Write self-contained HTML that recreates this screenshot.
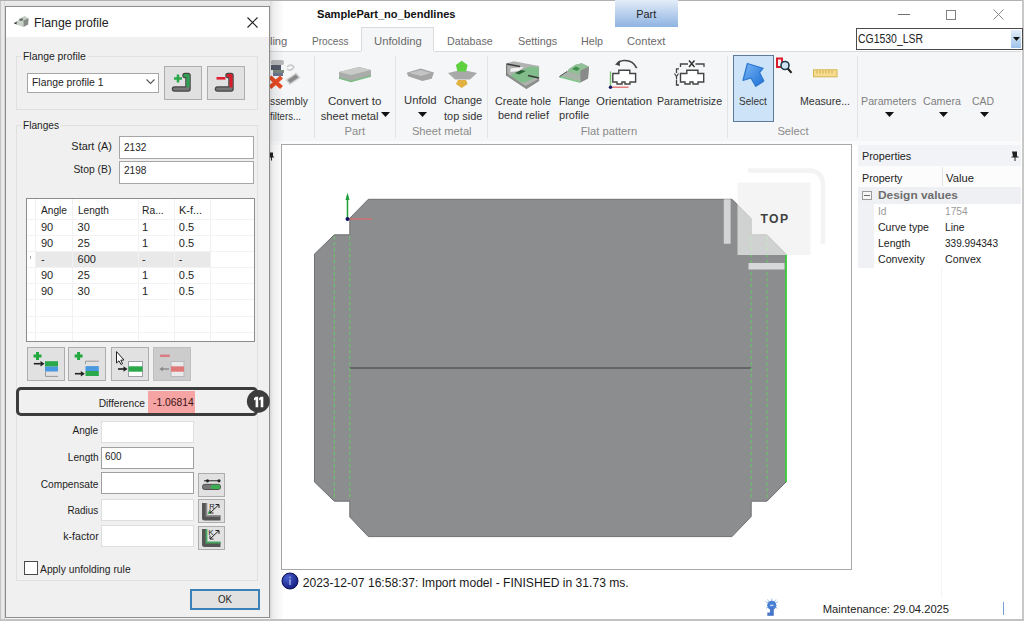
<!DOCTYPE html>
<html><head><meta charset="utf-8"><style>
html,body{margin:0;padding:0;}
body{width:1024px;height:621px;position:relative;overflow:hidden;background:#fff;font-family:"Liberation Sans",sans-serif;}
.t{position:absolute;white-space:nowrap;}
.b{position:absolute;}
svg.b{overflow:visible;}
</style></head><body>
<div class="b" style="left:0px;top:0px;width:1024px;height:1px;background:#b0b0b0"></div>
<div class="b" style="left:1022px;top:0px;width:2px;height:621px;background:#c8c8c8"></div>
<div class="b" style="left:0px;top:619px;width:1024px;height:2px;background:#c2c2c2"></div>
<div class="t" style="left:316.6px;top:8.1px;font-size:11.2px;line-height:13px;color:#111;font-weight:bold;transform:scaleX(0.990);transform-origin:left center;">SamplePart_no_bendlines</div>
<div class="b" style="left:615px;top:0px;width:63px;height:27px;background:linear-gradient(#e3edf8,#8fb3e2)"></div>
<div class="t" style="left:635.7px;top:7.5px;font-size:11.2px;line-height:13px;color:#222;transform:scaleX(0.974);transform-origin:center center;">Part</div>
<div class="b" style="left:898px;top:13.5px;width:12px;height:1.0px;background:#707070"></div>
<div class="b" style="left:946px;top:10px;width:10px;height:10px;border:1px solid #808080;box-sizing:border-box"></div>
<svg class="b" style="left:993px;top:9px" width="11" height="11" viewBox="0 0 11 11"><path d="M0.5 0.5 L10.5 10.5 M10.5 0.5 L0.5 10.5" stroke="#8a8a8a" stroke-width="1"/></svg>
<div class="b" style="left:856px;top:28px;width:167px;height:22px;border:1.5px solid #4a4a4a;background:#fff;box-sizing:border-box"></div>
<div class="b" style="left:1011px;top:30px;width:10px;height:18px;background:linear-gradient(#e4eef9,#9ec2ea)"></div>
<svg class="b" style="left:1013px;top:37px" width="7" height="4" viewBox="0 0 7 4"><path d="M0 0 L7 0 L3.5 4 Z" fill="#111"/></svg>
<div class="t" style="left:857.6px;top:32.1px;font-size:12px;line-height:14px;color:#222;transform:scaleX(0.871);transform-origin:left center;">CG1530_LSR</div>
<div class="b" style="left:361px;top:27px;width:73px;height:25px;background:#f5f6f7;border:1px solid #dadbdc;border-bottom:none;box-sizing:border-box"></div>
<div class="t" style="left:269.9px;top:34.5px;font-size:11.2px;line-height:13px;color:#6a6a6a;">ling</div>
<div class="t" style="left:312.3px;top:34.5px;font-size:11.2px;line-height:13px;color:#6a6a6a;transform:scaleX(0.905);transform-origin:left center;">Process</div>
<div class="t" style="left:373.9px;top:34.5px;font-size:11.2px;line-height:13px;color:#6a6a6a;transform:scaleX(1.010);transform-origin:left center;">Unfolding</div>
<div class="t" style="left:447.1px;top:34.5px;font-size:11.2px;line-height:13px;color:#6a6a6a;transform:scaleX(0.953);transform-origin:left center;">Database</div>
<div class="t" style="left:517.5px;top:34.5px;font-size:11.2px;line-height:13px;color:#6a6a6a;transform:scaleX(0.971);transform-origin:left center;">Settings</div>
<div class="t" style="left:580.9px;top:34.5px;font-size:11.2px;line-height:13px;color:#6a6a6a;transform:scaleX(0.959);transform-origin:left center;">Help</div>
<div class="t" style="left:627.1px;top:34.5px;font-size:11.2px;line-height:13px;color:#6a6a6a;transform:scaleX(0.995);transform-origin:left center;">Context</div>
<div class="b" style="left:270px;top:51px;width:751px;height:90px;background:#f5f6f7;border-top:1px solid #dadbdc;box-sizing:border-box"></div>
<div class="b" style="left:361px;top:51px;width:73px;height:1px;background:#f5f6f7"></div>
<div class="b" style="left:270px;top:141px;width:751px;height:4px;background:#fafafa"></div>
<div class="b" style="left:314px;top:56px;width:1px;height:82px;background:#e2e3e4"></div>
<div class="b" style="left:394.5px;top:56px;width:1.0px;height:82px;background:#e2e3e4"></div>
<div class="b" style="left:487px;top:56px;width:1px;height:82px;background:#e2e3e4"></div>
<div class="b" style="left:727px;top:56px;width:1px;height:82px;background:#e2e3e4"></div>
<div class="b" style="left:856.5px;top:56px;width:1.0px;height:82px;background:#e2e3e4"></div>
<div class="t" style="left:344.5px;top:125.3px;font-size:11.2px;line-height:13px;color:#8a8a8a;">Part</div>
<div class="t" style="left:411.9px;top:125.3px;font-size:11.2px;line-height:13px;color:#8a8a8a;">Sheet metal</div>
<div class="t" style="left:580.7px;top:125.3px;font-size:11.2px;line-height:13px;color:#8a8a8a;">Flat pattern</div>
<div class="t" style="left:777.4px;top:125.3px;font-size:11.2px;line-height:13px;color:#8a8a8a;">Select</div>
<div class="t" style="left:270.0px;top:94.8px;font-size:11.2px;line-height:13px;color:#333;transform:scaleX(0.925);transform-origin:left center;">ssembly</div>
<div class="t" style="left:270.0px;top:109.9px;font-size:11.2px;line-height:13px;color:#333;transform:scaleX(0.859);transform-origin:left center;">filters...</div>
<div class="t" style="left:328.1px;top:94.8px;font-size:11.2px;line-height:13px;color:#333;transform:scaleX(1.034);transform-origin:left center;">Convert to</div>
<div class="t" style="left:320.7px;top:109.9px;font-size:11.2px;line-height:13px;color:#333;">sheet metal</div>
<svg class="b" style="left:381px;top:112px" width="9" height="5" viewBox="0 0 9 5"><path d="M0 0 L9 0 L4.5 5 Z" fill="#111"/></svg>
<div class="t" style="left:403.8px;top:94.2px;font-size:11.2px;line-height:13px;color:#333;transform:scaleX(1.007);transform-origin:left center;">Unfold</div>
<svg class="b" style="left:417.5px;top:112px" width="9" height="5" viewBox="0 0 9 5"><path d="M0 0 L9 0 L4.5 5 Z" fill="#111"/></svg>
<div class="t" style="left:443.6px;top:94.2px;font-size:11.2px;line-height:13px;color:#333;transform:scaleX(0.969);transform-origin:left center;">Change</div>
<div class="t" style="left:443.6px;top:109.9px;font-size:11.2px;line-height:13px;color:#333;transform:scaleX(0.979);transform-origin:left center;">top side</div>
<div class="t" style="left:494.8px;top:94.5px;font-size:11.2px;line-height:13px;color:#333;transform:scaleX(0.969);transform-origin:left center;">Create hole</div>
<div class="t" style="left:497.7px;top:109.4px;font-size:11.2px;line-height:13px;color:#333;transform:scaleX(0.975);transform-origin:left center;">bend relief</div>
<div class="t" style="left:558.6px;top:94.5px;font-size:11.2px;line-height:13px;color:#333;transform:scaleX(0.905);transform-origin:left center;">Flange</div>
<div class="t" style="left:559.2px;top:109.4px;font-size:11.2px;line-height:13px;color:#333;transform:scaleX(0.987);transform-origin:left center;">profile</div>
<div class="t" style="left:596.2px;top:94.8px;font-size:11.2px;line-height:13px;color:#333;transform:scaleX(1.024);transform-origin:left center;">Orientation</div>
<div class="t" style="left:657.4px;top:94.8px;font-size:11.2px;line-height:13px;color:#333;transform:scaleX(0.952);transform-origin:left center;">Parametrisize</div>
<div class="b" style="left:733px;top:55px;width:41px;height:67px;background:#cde3f8;border:1px solid #5d7a98;box-sizing:border-box"></div>
<div class="t" style="left:739.2px;top:94.5px;font-size:11.2px;line-height:13px;color:#333;transform:scaleX(0.893);transform-origin:left center;">Select</div>
<div class="t" style="left:800.4px;top:94.5px;font-size:11.2px;line-height:13px;color:#333;transform:scaleX(0.945);transform-origin:left center;">Measure...</div>
<div class="t" style="left:861.0px;top:94.5px;font-size:11.2px;line-height:13px;color:#808080;transform:scaleX(0.955);transform-origin:left center;">Parameters</div>
<div class="t" style="left:923.4px;top:94.5px;font-size:11.2px;line-height:13px;color:#808080;transform:scaleX(0.951);transform-origin:left center;">Camera</div>
<div class="t" style="left:972.3px;top:94.5px;font-size:11.2px;line-height:13px;color:#808080;transform:scaleX(0.935);transform-origin:left center;">CAD</div>
<svg class="b" style="left:884.9px;top:112px" width="9" height="5" viewBox="0 0 9 5"><path d="M0 0 L9 0 L4.5 5 Z" fill="#111"/></svg>
<svg class="b" style="left:938.6px;top:112px" width="9" height="5" viewBox="0 0 9 5"><path d="M0 0 L9 0 L4.5 5 Z" fill="#111"/></svg>
<svg class="b" style="left:980.1px;top:112px" width="9" height="5" viewBox="0 0 9 5"><path d="M0 0 L9 0 L4.5 5 Z" fill="#111"/></svg>
<svg class="b" style="left:0px;top:0px" width="1024" height="150" viewBox="0 0 1024 150"><defs><linearGradient id="gg" x1="0" y1="0" x2="0" y2="1"><stop offset="0" stop-color="#d8d8d8"/><stop offset="1" stop-color="#8a8a8a"/></linearGradient><linearGradient id="gb" x1="0" y1="0" x2="1" y2="1"><stop offset="0" stop-color="#7ab8f5"/><stop offset="1" stop-color="#1d6ed6"/></linearGradient></defs><rect x="271" y="60" width="13" height="5" rx="2" fill="#b8b8b8"/><rect x="271" y="65" width="10" height="5" fill="#555a6a"/><rect x="273" y="70" width="11" height="3" fill="#7a8a80"/><rect x="273" y="73" width="10" height="3" fill="#6a7590"/><path d="M270 77 L281.5 87.5 M281.5 77 L270 87.5" stroke="#e84a22" stroke-width="4.2"/><path d="M287 67 q4 -4 7 0 q-3 5 -7 2" stroke="#c8c8c8" stroke-width="1.5" fill="none"/><path d="M286.5 80 L296 73.5 L299.5 77.5 L290 84 Z" fill="#8a8a8a" stroke="#d0d0d0" stroke-width="1.4"/><path d="M339 72 L359 67 L371 70 L371 76 L351 81.5 L339 78 Z" fill="#a9aca9"/><path d="M339 72 L359 67 L371 70 L351 75 Z" fill="#c9cbc9"/><path d="M339 78 L351 81.5 L371 76" stroke="#7dbb85" stroke-width="1.5" fill="none"/><path d="M406.7 72.8 L420.7 68.5 L434 72.4 L431.7 78.7 L422.3 81 L408.2 76.3 Z" fill="#a5a5a5"/><path d="M409 73 L420.7 70 L431 73 L421 76 Z" fill="#c4c4c4"/><path d="M448 73 L462 69.7 L477 73 L470 79.4 L455 79.4 Z" fill="#a9a9a9"/><path d="M461.7 60.7 L467.6 65 L466 71.6 L457.5 71.6 L455.9 65 Z" fill="#5fd040"/><path d="M458 80 L466 80 L467.6 84 L461.7 88 L455.9 84 Z" fill="#e0b040"/><path d="M506.6 63.5 L513.6 61.2 L539.1 66 L539.1 81 L526.4 89 L506.6 75.7 Z" fill="#b0b2b0"/><path d="M512 74 L530 66.5 L539 67.5 L539 76.5 L523 83 L510 76.5 Z" fill="#80bd8a"/><path d="M510.5 68.5 L524 66.8 L519 71 L510.5 72 Z" fill="#f2f2f2"/><path d="M515 73 L521 70 L526 71 L519 74.5 Z" fill="#2f5f3a"/><path d="M506.6 75.7 L526.4 89 L539.1 81 L539.1 78.5 L525.5 86 L506.6 73 Z" fill="#8c8e8c"/><path d="M507 64 L520 66.5" stroke="#3a3a3a" stroke-width="1.6"/><path d="M528 75.5 L539 78" stroke="#3a3a3a" stroke-width="1.4"/><path d="M506.6 63.5 L506.6 75.7" stroke="#777" stroke-width="1.2"/><path d="M559.2 76.6 L567 71.5 L569 69 L575.6 64.7 L581.8 63.2 L589 66.8 L588 78.6 L580.8 82.2 Z" fill="#9aa89a"/><path d="M559.5 76.5 L567 71.5 L580 74.5 L580.8 82 Z" fill="#a8b4a8"/><path d="M569 69 L575.6 64.7 L581.8 63.2 L589 66.8 L580.5 70.5 L580 74.5 L567.5 71.5 Z" fill="#92c096"/><path d="M572 69 L576 66.5 L580 68.5 L577 71 Z" fill="#3f8f4f"/><path d="M580.5 70.5 L589 66.8 L588 78.6 L580.8 82.2 Z" fill="#8a8a8a"/><path d="M559.5 76.8 L580.8 82.4" stroke="#7cc88a" stroke-width="1.4"/><path d="M559.5 76.5 L567 71.5" stroke="#555" stroke-width="1"/><path d="M636.7 68.2 Q633 60 624 60.5 Q619 61 617.5 63.5" stroke="#444" stroke-width="1.6" fill="none"/><path d="M615 64.5 L619.5 60.5 L620 66 Z" fill="#444"/><path d="M612.8 73.5 L618.8 73.5 L618.8 70.3 L629.8 70.3 L629.8 73.5 L635.6 73.5 L635.6 82 L630 82 L630 84 L625 84 L625 82 L622 82 L622 84 L617 84 L617 82 L612.8 82 Z" fill="#fff" stroke="#444" stroke-width="1.4"/><path d="M610.5 71.5 L610.5 87" stroke="#7ac070" stroke-width="1.4"/><path d="M610.5 87.2 L628.5 87.2" stroke="#e06060" stroke-width="1.2"/><circle cx="610.5" cy="87.3" r="1.7" fill="#1a1a6a"/><path d="M680.5 73.5 L686.8 73.5 L686.8 70.3 L697.9 70.3 L697.9 73.5 L703.7 73.5 L703.7 82 L698 82 L698 84 L693 84 L693 82 L690 82 L690 84 L685 84 L685 82 L680.5 82 Z" fill="#fff" stroke="#444" stroke-width="1.4"/><path d="M680.5 67 L680.5 64 L688 64 M695.5 64 L704 64 L704 67" stroke="#444" stroke-width="1.3" fill="none"/><path d="M689 60.5 L694.5 67 M694.5 60.5 L689 67" stroke="#333" stroke-width="1.5"/><path d="M679 68.8 L676.5 68.8 L676.5 73 M676.5 80 L676.5 85 L679 85" stroke="#444" stroke-width="1.3" fill="none"/><path d="M674.5 73.5 L676.5 76.5 L678.5 73.5 M676.5 76.5 L676.5 79.5" stroke="#444" stroke-width="1.2" fill="none"/><path d="M747.4 63.5 L763 68.3 L759.5 72.5 L763.8 81 L755.8 86.3 L751 78 L743 80.3 Z" fill="url(#gb)" stroke="#2f78d0" stroke-width="1.3" stroke-linejoin="round"/><rect x="777" y="58.5" width="5" height="8.5" fill="none" stroke="#d81e2a" stroke-width="2"/><circle cx="785" cy="65.5" r="4" fill="#cfe3f0" stroke="#1f3f4f" stroke-width="1.6"/><path d="M787.8 68.5 L791.5 72.8" stroke="#1a1a1a" stroke-width="2"/><rect x="813.5" y="69.8" width="23.5" height="7" fill="#f6dc8e" stroke="#d8b450" stroke-width="1"/><path d="M817 70.5 v3 M820 70.5 v3 M823 70.5 v3 M826 70.5 v3 M829 70.5 v3 M832 70.5 v3" stroke="#c8a040" stroke-width="0.8"/></svg>
<div class="b" style="left:281px;top:144px;width:571px;height:426px;background:#fff;border:1px solid #a8a8a8;box-sizing:border-box"></div>
<svg class="b" style="left:0px;top:0px" width="1024" height="621" viewBox="0 0 1024 621"><polygon points="368.3,199.3 732,199.3 751.2,218.5 751.2,234.8 767,234.8 786,254 786,482 767,501.2 751.2,501.2 751.2,516.5 732,536.6 368.3,536.6 349.8,517 349.8,501.2 334.3,501.2 314.5,482 314.5,254 334.3,234.8 349.8,234.8 349.8,218.2" fill="#8b8d8f" stroke="#6f7173" stroke-width="1"/><line x1="349.8" y1="368" x2="751.2" y2="368" stroke="#3a3a3a" stroke-width="1"/><g stroke="#66cc66" stroke-width="1.1" stroke-dasharray="3.5 2.5" stroke-opacity="0.85"><line x1="334.3" y1="236" x2="334.3" y2="500"/><line x1="349.8" y1="236" x2="349.8" y2="500"/><line x1="751.2" y1="236" x2="751.2" y2="500"/><line x1="767" y1="236" x2="767" y2="500"/></g><line x1="786" y1="254" x2="786" y2="482" stroke="#3ad03a" stroke-width="1.8"/><line x1="347.5" y1="219" x2="347.5" y2="196" stroke="#1e9e3a" stroke-width="1.5"/><path d="M345.5 200 L347.5 192.5 L349.5 200 Z" fill="#1e9e3a"/><line x1="348" y1="219" x2="372" y2="219" stroke="#e06a6a" stroke-width="1.2"/><circle cx="347.5" cy="219" r="2" fill="#101060"/><path d="M748 170.5 L808 170.5 Q823 170.5 823 185.5 L823 244" stroke="#f3f3f3" stroke-width="4.5" fill="none"/><rect x="737.5" y="182.5" width="73" height="72.5" fill="#efefef" fill-opacity="0.69"/><rect x="723.8" y="199.3" width="6.8" height="44.5" fill="#d2d4d6"/><rect x="748.5" y="263" width="36" height="6.5" fill="#d6d8d9"/></svg>
<div class="t" style="left:760.4px;top:211.5px;font-size:12.2px;line-height:15px;color:#404040;font-weight:bold;letter-spacing:1.5px;">TOP</div>
<svg class="b" style="left:269px;top:152px" width="5" height="9" viewBox="0 0 5 9"><path d="M0 0.5 h4 v4 h1 v1 h-2 v3 h-1 v-3 h-2 z" fill="#222"/></svg>
<div class="b" style="left:858px;top:145px;width:163px;height:21px;background:#f1f3f7"></div>
<div class="t" style="left:862.3px;top:149.5px;font-size:11.2px;line-height:13px;color:#222;transform:scaleX(0.966);transform-origin:left center;">Properties</div>
<svg class="b" style="left:1010px;top:151px" width="9" height="10" viewBox="0 0 9 10"><path d="M2 0.5 h5 v5 h1.5 v1 h-3 v3.5 h-1 v-3.5 h-3 v-1 h1.5 z" fill="#222"/></svg>
<div class="b" style="left:858px;top:166px;width:163px;height:21px;background:#fcfcfc"></div>
<div class="b" style="left:941.5px;top:167px;width:1.0px;height:19px;background:#e4e4e4"></div>
<div class="t" style="left:862.3px;top:171.5px;font-size:11.2px;line-height:13px;color:#222;transform:scaleX(0.957);transform-origin:left center;">Property</div>
<div class="t" style="left:946.1px;top:171.5px;font-size:11.2px;line-height:13px;color:#222;">Value</div>
<div class="b" style="left:858px;top:187px;width:163px;height:17px;background:#eef0f3"></div>
<div class="b" style="left:858px;top:204px;width:16px;height:64px;background:#f0f1f4"></div>
<div class="b" style="left:862px;top:190.5px;width:9.5px;height:9.0px;border:1px solid #9a9a9a;box-sizing:border-box;background:#f6f6f6"></div>
<div class="b" style="left:864px;top:194.5px;width:5.5px;height:1.0px;background:#6a6a6a"></div>
<div class="t" style="left:878.0px;top:188.3px;font-size:11.5px;line-height:14px;color:#6e6e6e;font-weight:bold;transform:scaleX(1.034);transform-origin:left center;">Design values</div>
<div class="t" style="left:878.0px;top:204.9px;font-size:11.2px;line-height:13px;color:#9a9a9a;transform:scaleX(0.910);transform-origin:left center;">Id</div>
<div class="t" style="left:944.6px;top:204.9px;font-size:11.2px;line-height:13px;color:#9a9a9a;transform:scaleX(0.907);transform-origin:left center;">1754</div>
<div class="t" style="left:878.0px;top:221.1px;font-size:11.2px;line-height:13px;color:#222;transform:scaleX(0.942);transform-origin:left center;">Curve type</div>
<div class="t" style="left:944.6px;top:221.1px;font-size:11.2px;line-height:13px;color:#222;transform:scaleX(0.926);transform-origin:left center;">Line</div>
<div class="t" style="left:878.0px;top:237.2px;font-size:11.2px;line-height:13px;color:#222;transform:scaleX(0.943);transform-origin:left center;">Length</div>
<div class="t" style="left:944.6px;top:237.2px;font-size:11.2px;line-height:13px;color:#222;transform:scaleX(0.896);transform-origin:left center;">339.994343</div>
<div class="t" style="left:878.0px;top:253.4px;font-size:11.2px;line-height:13px;color:#222;transform:scaleX(0.952);transform-origin:left center;">Convexity</div>
<div class="t" style="left:944.6px;top:253.4px;font-size:11.2px;line-height:13px;color:#222;transform:scaleX(0.953);transform-origin:left center;">Convex</div>
<div class="b" style="left:941px;top:268px;width:1px;height:330px;background:#f4f4f4"></div>
<svg class="b" style="left:281px;top:572px" width="18" height="18" viewBox="0 0 18 18"><defs><radialGradient id="ig" cx="0.35" cy="0.3" r="0.8"><stop offset="0" stop-color="#4a60d0"/><stop offset="1" stop-color="#101878"/></radialGradient></defs><circle cx="9" cy="9" r="8" fill="url(#ig)" stroke="#0a0f50" stroke-width="1"/><rect x="8.3" y="7.3" width="1.4" height="5.6" fill="#a8b4f0"/><rect x="8.3" y="4.6" width="1.4" height="1.5" fill="#a8b4f0"/></svg>
<div class="t" style="left:302.7px;top:575.7px;font-size:12.1px;line-height:15px;color:#1a1a1a;">2023-12-07 16:58:37: Import model - FINISHED in 31.73 ms.</div>
<svg class="b" style="left:758px;top:594px" width="28" height="26" viewBox="0 0 28 26"><g stroke="#9cc0ec" stroke-width="1"><path d="M13.8 11.3 L7.5 7.5 M13.8 11.3 L20 7.5 M13.8 11.3 L9.5 5.5 M13.8 11.3 L18 5.5 M13.8 11.3 L13.8 4.6 M13.8 11.3 L8 14.3 M13.8 11.3 L19.6 14.3"/></g><circle cx="13.8" cy="11.3" r="4.6" fill="#4a80d2"/><rect x="12" y="14" width="3.8" height="7.8" fill="#4a78c8"/><rect x="9.3" y="18.5" width="3" height="3.3" fill="#4a78c8"/><rect x="12.2" y="10.8" width="3.2" height="1.1" fill="#dfeaff"/></svg>
<div class="t" style="left:822.8px;top:602.6px;font-size:11.2px;line-height:13px;color:#222;">Maintenance: 29.04.2025</div>
<div class="b" style="left:1003px;top:602px;width:1px;height:13px;background:#7aa0d0"></div>
<div class="b" style="left:0px;top:1px;width:5px;height:618px;background:linear-gradient(90deg,#b4b4b4 0,#e6e6e6 1.5px,#ececec 3.5px,#c8c8c8 5px)"></div>
<div class="b" style="left:5px;top:1px;width:265px;height:5px;background:linear-gradient(#ececec,#e4e4e4)"></div>
<div class="b" style="left:270px;top:1px;width:14px;height:618px;background:linear-gradient(90deg,rgba(0,0,0,0.16),rgba(0,0,0,0.07) 3px,rgba(0,0,0,0.0))"></div>
<div class="b" style="left:5px;top:617px;width:265px;height:2px;background:linear-gradient(rgba(0,0,0,0.12),rgba(0,0,0,0))"></div>
<div class="b" style="left:5px;top:6px;width:265px;height:612px;background:#f0f0f0;border:1px solid #8c8c8c;box-sizing:border-box"></div>
<div class="b" style="left:6px;top:7px;width:263px;height:30px;background:#fff"></div>
<svg class="b" style="left:13px;top:15px" width="17" height="13" viewBox="0 0 17 13"><path d="M0.8 8.3 L5.7 5.3 L6 4 L11.5 1.3 L15.5 3.4 L15 9.5 L10.6 11.8 Z" fill="#a8b0a8"/><path d="M6 4 L11.5 1.3 L15.5 3.4 L10.5 5.5 Z" fill="#c4ccc4"/><path d="M6.3 4.6 L9 3.3 L10.3 4.6 L7.6 5.9 Z" fill="#5a625a"/><path d="M10.5 5.5 L15.5 3.4 L15 9.5 L10.6 11.8 Z" fill="#858b85"/><path d="M1.5 8.3 L5.7 5.8 L10.4 6.2 L10.5 11.5 Z" fill="#c8d2c8"/><path d="M0.8 8.3 L3.8 6.6 L3.5 9.6 Z" fill="#3a3f3a"/></svg>
<div class="t" style="left:33.5px;top:14.5px;font-size:13px;line-height:16px;color:#222;transform:scaleX(0.947);transform-origin:left center;">Flange profile</div>
<svg class="b" style="left:246.5px;top:16.5px" width="11" height="11" viewBox="0 0 11 11"><path d="M0.5 0.5 L10.5 10.5 M10.5 0.5 L0.5 10.5" stroke="#222" stroke-width="1.1"/></svg>
<div class="b" style="left:16px;top:56px;width:242px;height:54px;border:1px solid #e0e0e0;box-sizing:border-box"></div>
<div class="b" style="left:21px;top:53px;width:66.8px;height:6px;background:#f0f0f0"></div>
<div class="t" style="left:22.9px;top:49.5px;font-size:11px;line-height:13px;color:#1e1e1e;transform:scaleX(0.942);transform-origin:left center;">Flange profile</div>
<div class="b" style="left:16px;top:125px;width:242px;height:456px;border:1px solid #e0e0e0;box-sizing:border-box"></div>
<div class="b" style="left:21px;top:122px;width:40px;height:6px;background:#f0f0f0"></div>
<div class="t" style="left:22.9px;top:118.5px;font-size:11px;line-height:13px;color:#1e1e1e;transform:scaleX(0.920);transform-origin:left center;">Flanges</div>
<div class="b" style="left:27px;top:73px;width:132px;height:20px;background:#fff;border:1px solid #a6a6a6;box-sizing:border-box"></div>
<div class="t" style="left:31.7px;top:76.3px;font-size:11px;line-height:13px;color:#1e1e1e;transform:scaleX(0.942);transform-origin:left center;">Flange profile 1</div>
<svg class="b" style="left:146px;top:79px" width="9" height="6" viewBox="0 0 9 6"><path d="M0.5 0.5 L4.5 4.5 L8.5 0.5" stroke="#555" stroke-width="1.1" fill="none"/></svg>
<div class="b" style="left:164px;top:66px;width:38px;height:34px;background:#e1e1e1;border:1px solid #adadad;box-sizing:border-box"></div>
<div class="b" style="left:207px;top:66px;width:38px;height:34px;background:#e1e1e1;border:1px solid #adadad;box-sizing:border-box"></div>
<svg class="b" style="left:164px;top:66px" width="38" height="34" viewBox="0 0 38 34"><path d="M10 12.5 h8 M14 8.5 v8" stroke="#2aa84a" stroke-width="2.6"/><path d="M10.5 23 H24 V9.5 H21" stroke="#444" stroke-width="5.5" fill="none" stroke-linejoin="round" stroke-linecap="round"/><path d="M10.5 23 H24 V9.5 H21" stroke="#777" stroke-width="3" fill="none" stroke-linejoin="round" stroke-linecap="round"/><path d="M24 20 V9.5 H21" stroke="#2ea050" stroke-width="3.2" fill="none" stroke-linejoin="round" stroke-linecap="round"/></svg>
<svg class="b" style="left:207px;top:66px" width="38" height="34" viewBox="0 0 38 34"><path d="M9.5 12.3 h9" stroke="#e02030" stroke-width="2.6"/><path d="M10.5 23 H24 V9.5 H21" stroke="#444" stroke-width="5.5" fill="none" stroke-linejoin="round" stroke-linecap="round"/><path d="M10.5 23 H24 V9.5 H21" stroke="#777" stroke-width="3" fill="none" stroke-linejoin="round" stroke-linecap="round"/><path d="M24 20 V9.5 H21" stroke="#d81e2a" stroke-width="3.2" fill="none" stroke-linejoin="round" stroke-linecap="round"/></svg>
<div class="t" style="left:70.5px;top:140.1px;font-size:11px;line-height:13px;color:#1e1e1e;transform:scaleX(0.991);transform-origin:right center;">Start (A)</div>
<div class="b" style="left:119px;top:136px;width:135px;height:23px;background:#fff;border:1px solid #a6a6a6;box-sizing:border-box"></div>
<div class="t" style="left:124.4px;top:140.5px;font-size:11px;line-height:13px;color:#1e1e1e;transform:scaleX(0.915);transform-origin:left center;">2132</div>
<div class="t" style="left:71.1px;top:162.5px;font-size:11px;line-height:13px;color:#1e1e1e;transform:scaleX(0.939);transform-origin:right center;">Stop (B)</div>
<div class="b" style="left:119px;top:161px;width:135px;height:23px;background:#fff;border:1px solid #a6a6a6;box-sizing:border-box"></div>
<div class="t" style="left:124.4px;top:164.1px;font-size:11px;line-height:13px;color:#1e1e1e;transform:scaleX(0.915);transform-origin:left center;">2198</div>
<div class="b" style="left:26px;top:198px;width:229px;height:144px;background:#fff;border:1px solid #8c8c8c;box-sizing:border-box"></div>
<div class="b" style="left:35px;top:251px;width:175px;height:16px;background:#e9e9e9"></div>
<div class="b" style="left:27px;top:219px;width:227px;height:1px;background:#f3f3f3"></div>
<div class="b" style="left:27px;top:235px;width:227px;height:1px;background:#f3f3f3"></div>
<div class="b" style="left:27px;top:251px;width:227px;height:1px;background:#f3f3f3"></div>
<div class="b" style="left:27px;top:267px;width:227px;height:1px;background:#f3f3f3"></div>
<div class="b" style="left:27px;top:283px;width:227px;height:1px;background:#f3f3f3"></div>
<div class="b" style="left:27px;top:299px;width:227px;height:1px;background:#f3f3f3"></div>
<div class="b" style="left:27px;top:316px;width:227px;height:1px;background:#f3f3f3"></div>
<div class="b" style="left:27px;top:332px;width:227px;height:1px;background:#f3f3f3"></div>
<div class="b" style="left:35px;top:199px;width:1px;height:142px;background:#f1f1f1"></div>
<div class="b" style="left:72px;top:199px;width:1px;height:142px;background:#f1f1f1"></div>
<div class="b" style="left:137.5px;top:199px;width:1.0px;height:142px;background:#f1f1f1"></div>
<div class="b" style="left:174px;top:199px;width:1px;height:142px;background:#f1f1f1"></div>
<div class="b" style="left:210px;top:199px;width:1px;height:142px;background:#f1f1f1"></div>
<div class="b" style="left:30px;top:256px;width:1px;height:3px;background:#aaa"></div>
<div class="t" style="left:40.9px;top:203.5px;font-size:11px;line-height:13px;color:#1e1e1e;transform:scaleX(0.924);transform-origin:left center;">Angle</div>
<div class="t" style="left:77.6px;top:203.5px;font-size:11px;line-height:13px;color:#1e1e1e;transform:scaleX(0.915);transform-origin:left center;">Length</div>
<div class="t" style="left:141.9px;top:203.5px;font-size:11px;line-height:13px;color:#1e1e1e;transform:scaleX(0.934);transform-origin:left center;">Ra...</div>
<div class="t" style="left:178.8px;top:203.5px;font-size:11px;line-height:13px;color:#1e1e1e;transform:scaleX(0.990);transform-origin:left center;">K-f...</div>
<div class="t" style="left:40.9px;top:220.8px;font-size:11px;line-height:13px;color:#1e1e1e;">90</div>
<div class="t" style="left:77.6px;top:220.8px;font-size:11px;line-height:13px;color:#1e1e1e;">30</div>
<div class="t" style="left:141.9px;top:220.8px;font-size:11px;line-height:13px;color:#1e1e1e;">1</div>
<div class="t" style="left:178.8px;top:220.8px;font-size:11px;line-height:13px;color:#1e1e1e;">0.5</div>
<div class="t" style="left:40.9px;top:236.9px;font-size:11px;line-height:13px;color:#1e1e1e;">90</div>
<div class="t" style="left:77.6px;top:236.9px;font-size:11px;line-height:13px;color:#1e1e1e;">25</div>
<div class="t" style="left:141.9px;top:236.9px;font-size:11px;line-height:13px;color:#1e1e1e;">1</div>
<div class="t" style="left:178.8px;top:236.9px;font-size:11px;line-height:13px;color:#1e1e1e;">0.5</div>
<div class="t" style="left:40.9px;top:253.0px;font-size:11px;line-height:13px;color:#1e1e1e;">-</div>
<div class="t" style="left:77.6px;top:253.0px;font-size:11px;line-height:13px;color:#1e1e1e;">600</div>
<div class="t" style="left:141.9px;top:253.0px;font-size:11px;line-height:13px;color:#1e1e1e;">-</div>
<div class="t" style="left:178.8px;top:253.0px;font-size:11px;line-height:13px;color:#1e1e1e;">-</div>
<div class="t" style="left:40.9px;top:269.1px;font-size:11px;line-height:13px;color:#1e1e1e;">90</div>
<div class="t" style="left:77.6px;top:269.1px;font-size:11px;line-height:13px;color:#1e1e1e;">25</div>
<div class="t" style="left:141.9px;top:269.1px;font-size:11px;line-height:13px;color:#1e1e1e;">1</div>
<div class="t" style="left:178.8px;top:269.1px;font-size:11px;line-height:13px;color:#1e1e1e;">0.5</div>
<div class="t" style="left:40.9px;top:285.2px;font-size:11px;line-height:13px;color:#1e1e1e;">90</div>
<div class="t" style="left:77.6px;top:285.2px;font-size:11px;line-height:13px;color:#1e1e1e;">30</div>
<div class="t" style="left:141.9px;top:285.2px;font-size:11px;line-height:13px;color:#1e1e1e;">1</div>
<div class="t" style="left:178.8px;top:285.2px;font-size:11px;line-height:13px;color:#1e1e1e;">0.5</div>
<div class="b" style="left:27px;top:347px;width:38px;height:34px;background:#e1e1e1;border:1px solid #adadad;box-sizing:border-box"></div>
<div class="b" style="left:67.5px;top:347px;width:38.0px;height:34px;background:#e1e1e1;border:1px solid #adadad;box-sizing:border-box"></div>
<div class="b" style="left:110.5px;top:347px;width:38.5px;height:34px;background:#e1e1e1;border:1px solid #adadad;box-sizing:border-box"></div>
<div class="b" style="left:153px;top:347px;width:38px;height:34px;background:#cccccc;border:1px solid #bfbfbf;box-sizing:border-box"></div>
<svg class="b" style="left:0px;top:340px" width="200" height="45" viewBox="0 0 200 45"><path d="M33.5 15.9 h8 M37.5 11.9 v8" stroke="#22a840" stroke-width="3"/><path d="M33.8 23.7 h7" stroke="#222" stroke-width="1.6"/><path d="M40.5 21 L44.5 23.7 L40.5 26.4 Z" fill="#222"/><rect x="45" y="21.2" width="13" height="5.4" fill="#2aa84a"/><rect x="45" y="26.6" width="13" height="4.9" fill="#4a98e0"/><path d="M45.5 31.5 V36.4 H58" stroke="#999" stroke-width="1" fill="none"/><path d="M74.6 15.9 h8 M78.6 11.9 v8" stroke="#22a840" stroke-width="3"/><path d="M85.5 24 V21.2 H98.8" stroke="#999" stroke-width="1" fill="none"/><rect x="85.5" y="26.1" width="13.3" height="4.9" fill="#4a98e0"/><rect x="85.5" y="31" width="13.3" height="5" fill="#2aa84a"/><path d="M74.9 33.7 h6.5" stroke="#222" stroke-width="1.6"/><path d="M80.8 31 L84.8 33.7 L80.8 36.4 Z" fill="#222"/><path d="M116.5 11.6 L116.5 23 L119 20.8 L121 24.5 L122.6 23.7 L120.8 20.2 L124 20 Z" fill="#fff" stroke="#222" stroke-width="1"/><rect x="128.5" y="21.5" width="14" height="15" fill="#fff" stroke="#a0a0a8" stroke-width="1"/><rect x="128.5" y="26.3" width="14" height="5.4" fill="#2aa84a"/><path d="M118 29 h6" stroke="#222" stroke-width="1.6"/><path d="M123.5 26.3 L127.5 29 L123.5 31.7 Z" fill="#222"/><path d="M160.1 15.8 h9.7" stroke="#d87a80" stroke-width="2.4"/><rect x="171" y="21.5" width="13" height="15" fill="#eaeaea" stroke="#b8b8c0" stroke-width="1"/><rect x="171" y="26.3" width="13" height="5.4" fill="#e07a7a"/><path d="M162 29 h7" stroke="#888" stroke-width="1.4"/><path d="M163 26.8 L159.3 29 L163 31.2 Z" fill="#888"/></svg>
<div class="b" style="left:15.5px;top:387px;width:242.5px;height:28.5px;border:3px solid #3c3c3c;border-radius:5px;box-sizing:border-box"></div>
<div class="t" style="left:95.1px;top:396.5px;font-size:11px;line-height:13px;color:#1e1e1e;transform:scaleX(0.927);transform-origin:right center;">Difference</div>
<div class="b" style="left:148px;top:391px;width:46.5px;height:21.5px;background:#f5a3a3"></div>
<div class="t" style="left:152.5px;top:395.8px;font-size:11px;line-height:13px;color:#3a1414;transform:scaleX(0.940);transform-origin:left center;">-1.06814</div>
<svg class="b" style="left:247px;top:390px" width="23" height="23" viewBox="0 0 23 23"><circle cx="11.3" cy="11.3" r="11.4" fill="#3d3d3d"/></svg>
<svg class="b" style="left:247px;top:390px" width="23" height="23" viewBox="0 0 23 23"><path d="M8.6 6.8 L11.2 6.8 L11.2 17.3 L8.6 17.3 L8.6 9.6 L7 10.6 L7 8.2 Z" fill="#fff"/><path d="M13.7 6.8 L16.3 6.8 L16.3 17.3 L13.7 17.3 L13.7 9.6 L12.1 10.6 L12.1 8.2 Z" fill="#fff"/></svg>
<div class="t" style="left:70.1px;top:424.4px;font-size:11px;line-height:13px;color:#1e1e1e;transform:scaleX(0.913);transform-origin:right center;">Angle</div>
<div class="b" style="left:100.5px;top:420.8px;width:93.5px;height:21.80000000000001px;background:#fff;border:1px solid #dedede;box-sizing:border-box"></div>
<div class="t" style="left:64.6px;top:450.5px;font-size:11px;line-height:13px;color:#1e1e1e;transform:scaleX(0.915);transform-origin:right center;">Length</div>
<div class="b" style="left:100.5px;top:446.5px;width:93.5px;height:22.19999999999999px;background:#fff;border:1px solid #a0a0a0;box-sizing:border-box"></div>
<div class="t" style="left:35.8px;top:477.9px;font-size:11px;line-height:13px;color:#1e1e1e;transform:scaleX(0.925);transform-origin:right center;">Compensate</div>
<div class="b" style="left:100.5px;top:472.2px;width:93.5px;height:22.19999999999999px;background:#fff;border:1px solid #a0a0a0;box-sizing:border-box"></div>
<div class="t" style="left:64.0px;top:503.8px;font-size:11px;line-height:13px;color:#1e1e1e;transform:scaleX(0.899);transform-origin:right center;">Radius</div>
<div class="b" style="left:100.5px;top:498.6px;width:93.5px;height:22.0px;background:#fff;border:1px solid #dedede;box-sizing:border-box"></div>
<div class="t" style="left:61.5px;top:529.5px;font-size:11px;line-height:13px;color:#1e1e1e;transform:scaleX(0.968);transform-origin:right center;">k-factor</div>
<div class="b" style="left:100.5px;top:524.8px;width:93.5px;height:22.200000000000045px;background:#fff;border:1px solid #dedede;box-sizing:border-box"></div>
<div class="t" style="left:105.0px;top:450.0px;font-size:11px;line-height:13px;color:#1e1e1e;transform:scaleX(0.899);transform-origin:left center;">600</div>
<div class="b" style="left:198px;top:472.5px;width:27px;height:24.5px;background:#e1e1e1;border:1px solid #adadad;box-sizing:border-box"></div>
<div class="b" style="left:198px;top:499px;width:27px;height:24px;background:#e1e1e1;border:1px solid #adadad;box-sizing:border-box"></div>
<div class="b" style="left:198px;top:525.5px;width:27px;height:24.0px;background:#e1e1e1;border:1px solid #adadad;box-sizing:border-box"></div>
<svg class="b" style="left:198px;top:472px" width="27" height="78" viewBox="0 0 27 78"><path d="M6 8.8 H20.5" stroke="#222" stroke-width="1"/><circle cx="9.5" cy="8.8" r="1.6" fill="#222"/><circle cx="21" cy="8.8" r="1.6" fill="#222"/><rect x="4.5" y="12.3" width="18" height="5.2" rx="2.2" fill="#777" stroke="#444" stroke-width="0.9"/><rect x="13" y="12.8" width="9" height="4.2" rx="1.5" fill="#3cb050"/><path d="M6.5 31 V46 H22.5" stroke="#555" stroke-width="5" fill="none" stroke-linejoin="round"/><path d="M8.5 31 V44 H22.5" stroke="#8a8a8a" stroke-width="1.6" fill="none"/><path d="M9.5 42 L11 38.5 L12.5 42 Z" fill="#3cb050"/><path d="M12 41 L21 32.5 M17.5 32.5 H21 V36 M12 37.5 V41 H15.5" stroke="#222" stroke-width="1" fill="none"/><text x="11.3" y="36.8" font-family="Liberation Sans" font-size="7.5" fill="#222">R</text><path d="M6.5 57 V72.5 H22.5" stroke="#555" stroke-width="5" fill="none" stroke-linejoin="round"/><path d="M8.5 57 V70.5 H22.5" stroke="#48a860" stroke-width="1.8" fill="none"/><path d="M12 67 L21 58.5 M17.5 58.5 H21 V62 M12 63.5 V67 H15.5" stroke="#222" stroke-width="1" fill="none"/><text x="10.3" y="63" font-family="Liberation Sans" font-size="8" fill="#222">K</text></svg>
<div class="b" style="left:24px;top:561px;width:13.5px;height:13.5px;background:#fff;border:1px solid #4a4a4a;box-sizing:border-box"></div>
<div class="t" style="left:40.4px;top:562.9px;font-size:11px;line-height:13px;color:#1e1e1e;transform:scaleX(0.938);transform-origin:left center;">Apply unfolding rule</div>
<div class="b" style="left:190px;top:588.5px;width:70px;height:21.0px;background:#e1e1e1;border:2px solid #3c80b8;box-sizing:border-box"></div>
<div class="t" style="left:217.1px;top:592.5px;font-size:11px;line-height:13px;color:#1e1e1e;transform:scaleX(0.881);transform-origin:center center;">OK</div>
</body></html>
